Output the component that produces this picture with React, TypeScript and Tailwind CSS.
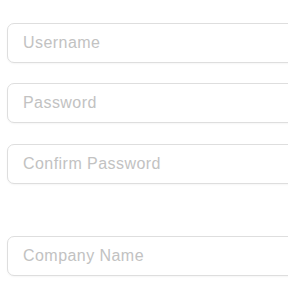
const fields = ["Username", "Password", "Confirm Password"];

function Field({
  placeholder,
  type = "text",
  className = "",
}: {
  placeholder: string;
  type?: string;
  className?: string;
}) {
  return (
    <input
      type={type}
      placeholder={placeholder}
      className={`h-[40px] w-[320px] shrink-0 rounded-[7px] border border-[#dedede] bg-white pl-[15px] pr-[10px] text-[16px] tracking-[0.45px] text-[#333] shadow-[0_1px_2px_rgba(0,0,0,0.04)] outline-none placeholder:text-[#c2c2c2] ${className}`}
      style={{ fontFamily: '"Liberation Sans", Arial, sans-serif' }}
    />
  );
}

export default function App() {
  return (
    <div className="h-[288px] w-[288px] overflow-hidden bg-white">
      <form className="flex flex-col gap-[20px] pl-[7px] pt-[23px]">
        {fields.map((f, i) => (
          <Field
            key={f}
            placeholder={f}
            type={f.includes("Password") ? "password" : "text"}
            className={i === 2 ? "mt-[1px]" : ""}
          />
        ))}
        <div className="h-[12px]" />
        <Field placeholder="Company Name" />
      </form>
    </div>
  );
}
